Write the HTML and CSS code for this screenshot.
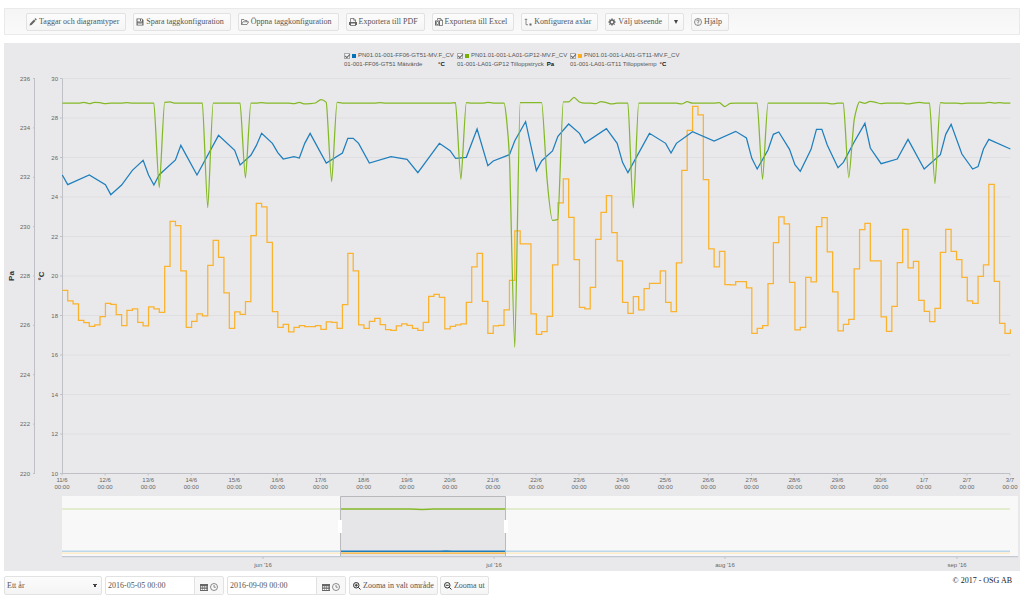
FILE: index.html
```html
<!DOCTYPE html>
<html lang="sv">
<head>
<meta charset="utf-8">
<meta name="viewport" content="width=device-width, initial-scale=1">
<title>Diagram</title>
<link rel="stylesheet" href="styles.css">
</head>
<body>
<nav class="toolbar" aria-label="Verktyg">
  <button class="btn" type="button"><svg class="icon" viewBox="0 0 16 16"><path d="M1 15l1.300-4.200L10 3l3 3-7.800 7.800zM11 2l1-1q1-.7 2 .2l.8.8q.9 1 .2 2l-1 1z"/></svg>Taggar och diagramtyper</button>
  <button class="btn" type="button"><svg class="icon" viewBox="0 0 16 16"><path fill-rule="evenodd" d="M1 1h11l3 3v11H1zM3 2.500V7h9V2.500h-2V6H8V2.500zM3.500 9.500v4h9v-4zM4.500 10.500h7v1h-7z"/></svg>Spara taggkonfiguration</button>
  <button class="btn" type="button"><svg class="icon" viewBox="0 0 16 16"><path class="line" d="M1 13V3h5l1.500 2H12v2.500M1 13l3-5.500h11.300L12 13z"/></svg>Öppna taggkonfiguration</button>
  <button class="btn" type="button"><svg class="icon" viewBox="0 0 16 16"><path class="line" d="M3 8V1h7l3 3v4M9.500 1v3.500H13"/><path fill-rule="evenodd" d="M0 8h16v6h-2v1.500H2V14H0zM4 11v3h8v-3z"/></svg>Exportera till PDF</button>
  <button class="btn" type="button"><svg class="icon" viewBox="0 0 16 16"><path class="line" d="M5 4V1h6l4 3.500V15H8M10.500 1v4H15"/><path fill-rule="evenodd" d="M0 5h10v10H0zM2 7l2 3-2 3h2l1-1.700L6 13h2l-2-3 2-3H6L5 8.700 4 7z"/></svg>Exportera till Excel</button>
  <button class="btn" type="button"><svg class="icon" viewBox="0 0 16 16"><path class="line" d="M1.500 4L4 1.500 6.500 4M4 2v11.500h4"/><path d="M11 11h4v4h-4z"/></svg>Konfigurera axlar</button>
  <div class="split">
    <button class="btn" type="button"><svg class="icon" viewBox="0 0 16 16"><path fill-rule="evenodd" d="M6.500 1h3v2l1.500.7L12.500 2.300l1.600 1.500-1.400 1.600.6 1.300H15v2.800h-1.800l-.6 1.400 1.400 1.600-1.600 1.500-1.400-1.300-1.500.6V15h-3v-1.700L5 12.700 3.500 14 2 12.500l1.300-1.600-.6-1.400H1V6.700h1.700l.6-1.300L2 3.800l1.500-1.500L5 3.700 6.500 3zM8 5.500a2.500 2.500 0 1 0 .01 0z"/></svg>Välj utseende</button>
    <button class="btn arrow" type="button" aria-label="Fler utseenden"><svg class="caret" viewBox="0 0 4 4"><path d="M0 0h4L2 4z"/></svg></button>
  </div>
  <button class="btn" type="button"><svg class="icon" viewBox="0 0 16 16"><circle class="line" cx="8" cy="8" r="7"/><path class="line" d="M5.500 6.500q0-2.500 2.500-2.500t2.500 2Q10.500 7.500 8 8v2M8 11v2"/></svg>Hjälp</button>
</nav>

<main class="panel">
  <div class="legend">
    <div class="entry wide">
      <label><input type="checkbox" checked><i class="swatch blue"></i>PN01.01-001-FF06-GT51-MV.F_CV</label>
      <p><span>01-001-FF06-GT51 Mätvärde</span><b>°C</b></p>
    </div>
    <div class="entry">
      <label><input type="checkbox" checked><i class="swatch green"></i>PN01.01-001-LA01-GP12-MV.F_CV</label>
      <p><span>01-001-LA01-GP12 Tilloppstryck</span><b>Pa</b></p>
    </div>
    <div class="entry">
      <label><input type="checkbox" checked><i class="swatch orange"></i>PN01.01-001-LA01-GT11-MV.F_CV</label>
      <p><span>01-001-LA01-GT11 Tilloppstemp</span><b>°C</b></p>
    </div>
  </div>
  <svg class="chart" viewBox="4 70 1016 501" role="img" aria-label="Temperatur och tryck över tid">
    <g id="grid"></g>
    <g id="labels"></g>
    <text class="unit" text-anchor="middle" transform="translate(14 276) rotate(-90)">Pa</text>
    <text class="unit" text-anchor="middle" transform="translate(44 276) rotate(-90)">°C</text>
    <g class="series" transform="translate(0 70) scale(.33333)">
      <path id="temp" class="s-orange"/>
      <path id="flow" class="s-blue"/>
      <path id="pressure" class="s-green"/>
    </g>
    <g class="overview">
      <rect class="range" x="62" y="496" width="956" height="61"/>
      <path class="s-green" d="M62 509H410l12 .4 12-.4H1010"/>
      <path class="s-orange" d="M62 553H1010"/>
      <path class="s-blue" d="M62 551.300H440l6-.4 6 .4H1010"/>
      <rect class="mask" x="62" y="496" width="278" height="60"/>
      <rect class="mask" x="506" y="496" width="512" height="60"/>
      <path class="base" d="M62 556.500H1018"/>
      <path class="edge" d="M340.500 556V496.500H505.500V556"/>
      <rect class="handle" x="338" y="520" width="4" height="13"/>
      <rect class="handle" x="504" y="520" width="4" height="13"/>
    </g>
  </svg>
</main>

<footer class="footer">
  <form class="controls">
    <select class="field period" aria-label="Period"><option>Ett år</option></select>
    <div class="field date">
      <input type="text" value="2016-05-05 00:00" aria-label="Från">
      <button type="button" aria-label="Välj startdatum och tid"><svg class="icon" viewBox="0 0 16 16"><path fill-rule="evenodd" d="M0 2h16v14H0zM1.500 6v1.500h13V6zM1.500 9v1.500h13V9zM1.500 12v2h13v-2z"/><path d="M4 5h1v10H4zM8 5h1v10H8zM12 5h1v10h-1z"/></svg><svg class="icon" viewBox="0 0 16 16"><circle class="line" cx="8" cy="8" r="7"/><path class="line" d="M8 4v4.500h3.500"/></svg></button>
    </div>
    <div class="field date">
      <input type="text" value="2016-09-09 00:00" aria-label="Till">
      <button type="button" aria-label="Välj slutdatum och tid"><svg class="icon" viewBox="0 0 16 16"><path fill-rule="evenodd" d="M0 2h16v14H0zM1.500 6v1.500h13V6zM1.500 9v1.500h13V9zM1.500 12v2h13v-2z"/><path d="M4 5h1v10H4zM8 5h1v10H8zM12 5h1v10h-1z"/></svg><svg class="icon" viewBox="0 0 16 16"><circle class="line" cx="8" cy="8" r="7"/><path class="line" d="M8 4v4.500h3.500"/></svg></button>
    </div>
    <button class="btn zoom" type="button"><svg class="icon" viewBox="0 0 16 16"><circle class="line bold" cx="6.500" cy="6.500" r="5.500"/><path class="line bold" d="M10.500 10.500L15 15M3.500 6.500h6M6.500 3.500v6"/></svg>Zooma in valt område</button>
    <button class="btn zoom" type="button"><svg class="icon" viewBox="0 0 16 16"><circle class="line bold" cx="6.500" cy="6.500" r="5.500"/><path class="line bold" d="M10.500 10.500L15 15M3.500 6.500h6"/></svg>Zooma ut</button>
  </form>
  <p class="copy">© 2017 - OSG AB</p>
</footer>
<script src="chart.js"></script>
</body>
</html>
```

FILE: styles.css
```css
* { box-sizing: border-box; }

body {
  margin: 0;
  padding: 8px 4px 4px;
  background: #fff;
  color: #555;
  font: 8px/10px "Liberation Serif", "Times New Roman", serif;
}

p { margin: 0; }
button, input, select { font: inherit; color: inherit; }

.toolbar {
  display: flex;
  flex-wrap: wrap;
  gap: 7px;
  padding: 4px 21px 3px;
  border: 1px solid #eaeaea;
  background: linear-gradient(#f5f5f5, #fafafa);
}

.btn {
  display: flex;
  align-items: center;
  gap: 2px;
  height: 18px;
  padding: 0 6px 0 2px;
  border: 1px solid #e2e2e2;
  border-radius: 2px;
  background: linear-gradient(#fcfcfc, #f5f5f5);
  white-space: nowrap;
}

.icon { width: 8px; height: 8px; flex: none; fill: #666; }
.line { fill: none; stroke: #666; stroke-width: 1.5; }
.bold { stroke: #333; stroke-width: 2; }
.caret { width: 4px; height: 4px; fill: #444; }

.split { display: flex; }
.split .btn { border-radius: 2px 0 0 2px; }
.split .arrow { margin-left: -1px; padding: 0 5px; border-radius: 0 2px 2px 0; }

.panel {
  margin-top: 8px;
  padding-top: 8px;
  background: #e9e9eb;
  font: 6px/9px "Liberation Sans", Arial, sans-serif;
}

.legend {
  display: flex;
  justify-content: center;
  gap: 3px;
  height: 19px;
  color: #555;
}

.entry { width: 110px; white-space: nowrap; }
.entry label { display: flex; align-items: center; gap: 2px; }
.entry p { display: flex; gap: 3px; }
.entry b { color: #111; }
.wide span { width: 91px; }

.entry input {
  appearance: none;
  display: grid;
  place-items: center;
  flex: none;
  width: 6px;
  height: 6px;
  margin: 0;
  border: 1px solid #aaa;
  background: #f4f4f4;
}

.entry input:checked::after {
  content: "";
  width: 4px;
  height: 2px;
  border: solid #666;
  border-width: 0 0 1px 1px;
  transform: rotate(-45deg);
}

.swatch { flex: none; width: 4px; height: 4px; }
.blue { background: #0072b8; }
.green { background: #76b000; }
.orange { background: #ffae18; }

.chart { display: block; width: 100%; height: auto; fill: #666; }
.chart .unit { font-size: 8px; font-weight: bold; fill: #333; }

.gridline { stroke: #dfdfe1; }
.axis { stroke: #bfc1c7; }

.series path, .overview path { fill: none; stroke-width: 1.25px; vector-effect: non-scaling-stroke; }
.chart .s-blue { stroke: #1f7fbd; }
.chart .s-green { stroke: #84b826; }
.chart .s-orange { stroke: #fbb22c; }

.overview .s-green, .overview .s-blue { stroke-width: 1.5px; }
.overview .range { fill: #e6e6e8; }
.overview .mask { fill: #fff; fill-opacity: .7; }
.overview .base { stroke: #c3c9d3; }
.overview .edge { stroke: #b9b9be; stroke-width: 1px; }
.overview .handle { fill: #fff; }

.footer {
  display: flex;
  justify-content: space-between;
  padding: 5px 8px 0 0;
}

.controls { display: flex; flex-wrap: wrap; gap: 3px; }

.field {
  height: 19px;
  border: 1px solid #e2e2e2;
  border-radius: 2px;
  background: #fff;
}

.period {
  appearance: none;
  width: 98px;
  padding: 0 2px;
  background:
    conic-gradient(from -27deg at 50% 100%, #444 54deg, transparent 0) right 4px center / 4px 4px no-repeat,
    linear-gradient(#fcfcfc, #f4f4f4);
}

.date { display: flex; width: 119px; }
.date input { flex: 1; min-width: 0; padding: 0 2px; border: 0; background: none; }

.date button {
  display: flex;
  align-items: center;
  gap: 2px;
  padding: 2px 5px 0;
  border: 0;
  border-left: 1px solid #e2e2e2;
  background: #f8f8f8;
}

.zoom { height: 19px; padding: 0 3px; }
.zoom + .zoom { margin-left: -1px; }
.copy { color: #222; }
```

FILE: chart.js
```js
// Plot origin and spacing in chart units
const LEFT = 62, RIGHT = 1010, TOP = 78.5, BOTTOM = 473.5;
const DAY = (RIGHT - LEFT) / 22;
// Samples are three hours apart; series coordinates use three units per chart unit
const START = 187, STEP = 16.16;
const sx = i => +(START + i * STEP).toFixed(1);

const temp = [661,693,702,751,758,769,765,740,700,703,734,767,721,717,757,768,711,717,727,589,454,467,603,772,754,732,738,586,511,562,669,775,726,733,695,497,
  400,411,517,725,772,763,786,772,767,770,770,767,778,756,757,775,704,550,603,765,775,754,745,764,779,781,768,762,766,775,781,757,679,673,682,777,769,765,762,697,591,550,694,790,768,766,
  720,631,483,522,522,732,793,785,739,585,399,327,442,569,712,717,652,508,427,377,488,573,697,730,680,720,656,640,640,603,697,725,579,301,181,109,135,329,537,591,544,644,645,635,635,654,
  790,775,767,641,518,441,462,637,780,772,622,636,470,443,546,666,783,763,748,597,479,460,573,573,741,784,709,578,478,594,574,691,724,755,715,547,478,544,569,622,693,700,619,585,343,634,760,790,778];

const flow = [[0,315],[1,344],[5,315],[8,344],[9,374],[11,345],[13,301],[15,271],[16,315],[17,345],[18,314],[21,270],[22,226],[25,315],[29,196],[32,241],[33,285],[35,256],[36,227],
  [37,190],[39,220],[40,248],[41,267],[43,260],[44,264],[45,220],[46,190],[49,279],[52,249],[53,205],[54,205],[55,220],[57,279],[61,260],[64,268],[66,308],[70,220],[72,242],[73,265],[75,262],[77,177],[79,287],[80,273],
  [83,254],[84,212],[86,155],[88,302],[89,272],[91,243],[92,199],[94,162],[96,190],[97,219],[101,176],[103,220],[104,277],[105,308],[109,190],[112,220],[113,249],[114,220],[117,185],[121,213],[125,184],[127,204],[128,265],
  [129,297],[131,240],[132,193],[133,186],[135,238],[136,284],[137,304],[139,238],[140,178],[141,178],[142,225],[144,293],[145,277],[147,216],[149,160],[150,234],[152,281],[155,267],[157,208],[160,297],[163,254],[164,193],[165,163],[167,252],[169,297],[170,290],[171,237],[172,208],[176,237]];

// Pressure stays near its set point apart from these samples
const dips = {4:97,5:101,6:97,7:98,8:101,12:98,18:353,19:97,20:96,27:413,34:324,37:98,43:101,44:97,45:102,46:101,47:99,48:89,49:97,50:335,51:97,59:98,73:98,74:328,75:98,79:97,
  83:260,84:832,85:98,86:98,87:98,88:98,89:98,90:330,91:451,92:448,93:96,94:96,95:82,96:96,99:101,100:95,101:98,102:102,106:414,115:102,116:95,122:98,123:110,124:100,
  130:328,143:102,146:323,147:150,148:96,149:100,150:94,151:97,152:101,157:102,159:97,162:341,163:98,167:101,172:97,174:98};

function steps(values) {
  let d = `M${sx(0)} ${values[0]}`;
  for (let i = 1; i < values.length; i++) d += `H${sx(i)}V${values[i]}`;
  return d;
}

// Cubic interpolation without overshoot
function smooth(values) {
  const n = values.length;
  const slope = values.map((v, i) => {
    if (i === 0 || i === n - 1) return 0;
    const a = v - values[i - 1], b = values[i + 1] - v;
    return a * b <= 0 ? 0 : Math.sign(a) * Math.min(Math.abs(a), Math.abs(b), Math.abs(a + b) / 4) * 2;
  });
  let d = `M${sx(0)} ${values[0]}`;
  for (let i = 1; i < n; i++) {
    d += `C${sx(i - .8)} ${values[i - 1] + slope[i - 1] / 5} ${sx(i - .25)} ${values[i] - slope[i] / 4} ${sx(i)} ${values[i]}`;
  }
  return d;
}

document.getElementById('temp').setAttribute('d', steps(temp));
document.getElementById('flow').setAttribute('d', 'M' + flow.map(([i, y]) => `${sx(i)} ${y}`).join('L'));
document.getElementById('pressure').setAttribute('d', smooth(Array.from({ length: 177 }, (_, i) => dips[i] ?? 99.5)));

let grid = '', labels = '';
const line = (x1, y1, x2, y2, cls) => { grid += `<line class="${cls}" x1="${x1}" y1="${y1}" x2="${x2}" y2="${y2}"/>`; };
const label = (x, y, text, anchor = 'middle') => { labels += `<text x="${x}" y="${y}" text-anchor="${anchor}">${text}</text>`; };

for (let i = 0; i <= 10; i++) {
  const y = TOP + i * (BOTTOM - TOP) / 10;
  line(LEFT, y, RIGHT, y, i === 10 ? 'axis' : 'gridline');
  line(60, y, LEFT, y, 'axis');
  label(58, y + 2, 30 - 2 * i, 'end');
}
for (let i = 0; i <= 8; i++) {
  const y = TOP + i * (BOTTOM - TOP) / 8;
  line(33, y, 35, y, 'axis');
  label(30, y + 2, 236 - 2 * i, 'end');
}
line(34.5, TOP, 34.5, BOTTOM, 'axis');
line(62.5, TOP, 62.5, BOTTOM, 'axis');

for (let i = 0; i <= 22; i++) {
  const day = 11 + i;
  const x = LEFT + i * DAY;
  line(x, BOTTOM, x, BOTTOM + 2, 'axis');
  label(x, 482, day > 30 ? `${day - 30}/7` : `${day}/6`);
  label(x, 489, '00:00');
}
[['jun', 263], ['jul', 494], ['aug', 725], ['sep', 957]].forEach(([month, x]) => {
  line(x, 557, x, 559, 'axis');
  label(x, 567, `${month} '16`);
});

document.getElementById('grid').innerHTML = grid;
document.getElementById('labels').innerHTML = labels;
```
